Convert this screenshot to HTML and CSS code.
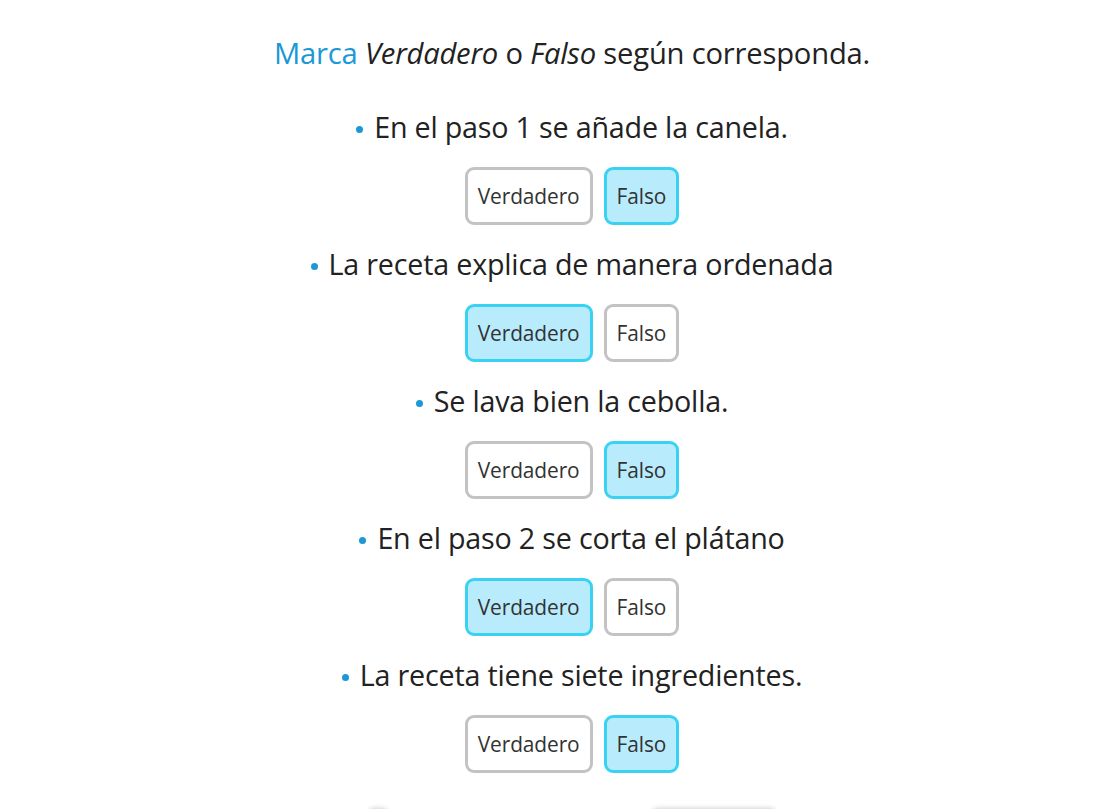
FILE: index.html
```html
<!DOCTYPE html>
<html lang="es">
<head>
<meta charset="utf-8">
<title>Verdadero o Falso</title>
<link rel="stylesheet" href="styles.css">
</head>
<body>
<main class="quiz">
  <h1 class="title"><span class="accent">Marca</span> <em>Verdadero</em> o <em>Falso</em> según corresponda.</h1>

  <section class="item">
    <p class="statement"><span class="dot"></span>En el paso 1 se añade la canela.</p>
    <div class="choices">
      <button class="choice">Verdadero</button>
      <button class="choice selected">Falso</button>
    </div>
  </section>

  <section class="item">
    <p class="statement"><span class="dot"></span>La receta explica de manera ordenada</p>
    <div class="choices">
      <button class="choice selected">Verdadero</button>
      <button class="choice">Falso</button>
    </div>
  </section>

  <section class="item">
    <p class="statement"><span class="dot"></span>Se lava bien la cebolla.</p>
    <div class="choices">
      <button class="choice">Verdadero</button>
      <button class="choice selected">Falso</button>
    </div>
  </section>

  <section class="item">
    <p class="statement"><span class="dot"></span>En el paso 2 se corta el plátano</p>
    <div class="choices">
      <button class="choice selected">Verdadero</button>
      <button class="choice">Falso</button>
    </div>
  </section>

  <section class="item">
    <p class="statement"><span class="dot"></span>La receta tiene siete ingredientes.</p>
    <div class="choices">
      <button class="choice">Verdadero</button>
      <button class="choice selected">Falso</button>
    </div>
  </section>

  <footer class="nav">
    <div class="nav-btn small"></div>
    <div class="nav-btn wide"></div>
  </footer>
</main>
</body>
</html>
```
FILE: styles.css
```css
html, body {
  margin: 0;
  padding: 0;
  background: #fff;
}
body {
  font-family: "Open Sans", "Noto Sans", "Liberation Sans", sans-serif;
  color: #222;
}
.quiz {
  display: flex;
  flex-direction: column;
  align-items: center;
  padding-top: 33px;
  padding-left: 47px;
}
.title {
  margin: 0 0 35px;
  font-size: 29.2px;
  letter-spacing: -0.2px;
  font-weight: 400;
  line-height: 40px;
  text-align: center;
}
.title em {
  font-style: italic;
}
.accent {
  color: #1b98d6;
}
.item {
  display: flex;
  flex-direction: column;
  align-items: center;
}
.statement {
  margin: -1px 0 20px;
  font-size: 28.7px;
  letter-spacing: -0.2px;
  line-height: 40px;
}
.dot {
  display: inline-block;
  width: 7px;
  height: 7px;
  border-radius: 50%;
  background: #1b98d6;
  margin-right: 11px;
  vertical-align: 5px;
}
.choices {
  display: flex;
  gap: 11px;
  margin-bottom: 20px;
}
.choice {
  height: 58px;
  padding: 0 10px;
  border: 3px solid #c3c3c3;
  border-radius: 9px;
  background: #fff;
  font-family: inherit;
  font-size: 20.9px;
  letter-spacing: -0.1px;
  color: #333;
}
.choice.selected {
  background: #b8ecfd;
  border-color: #3ad2f2;
}
.nav {
  width: 100%;
  display: flex;
  justify-content: center;
  gap: 262px;
  margin-top: 16px;
}
.nav-btn {
  height: 40px;
  border-radius: 8px;
  background: #fff;
  box-shadow: 0 -1px 5px rgba(0,0,0,0.18);
}
.nav-btn.small { width: 22px; }
.nav-btn.wide { width: 126px; }
```
